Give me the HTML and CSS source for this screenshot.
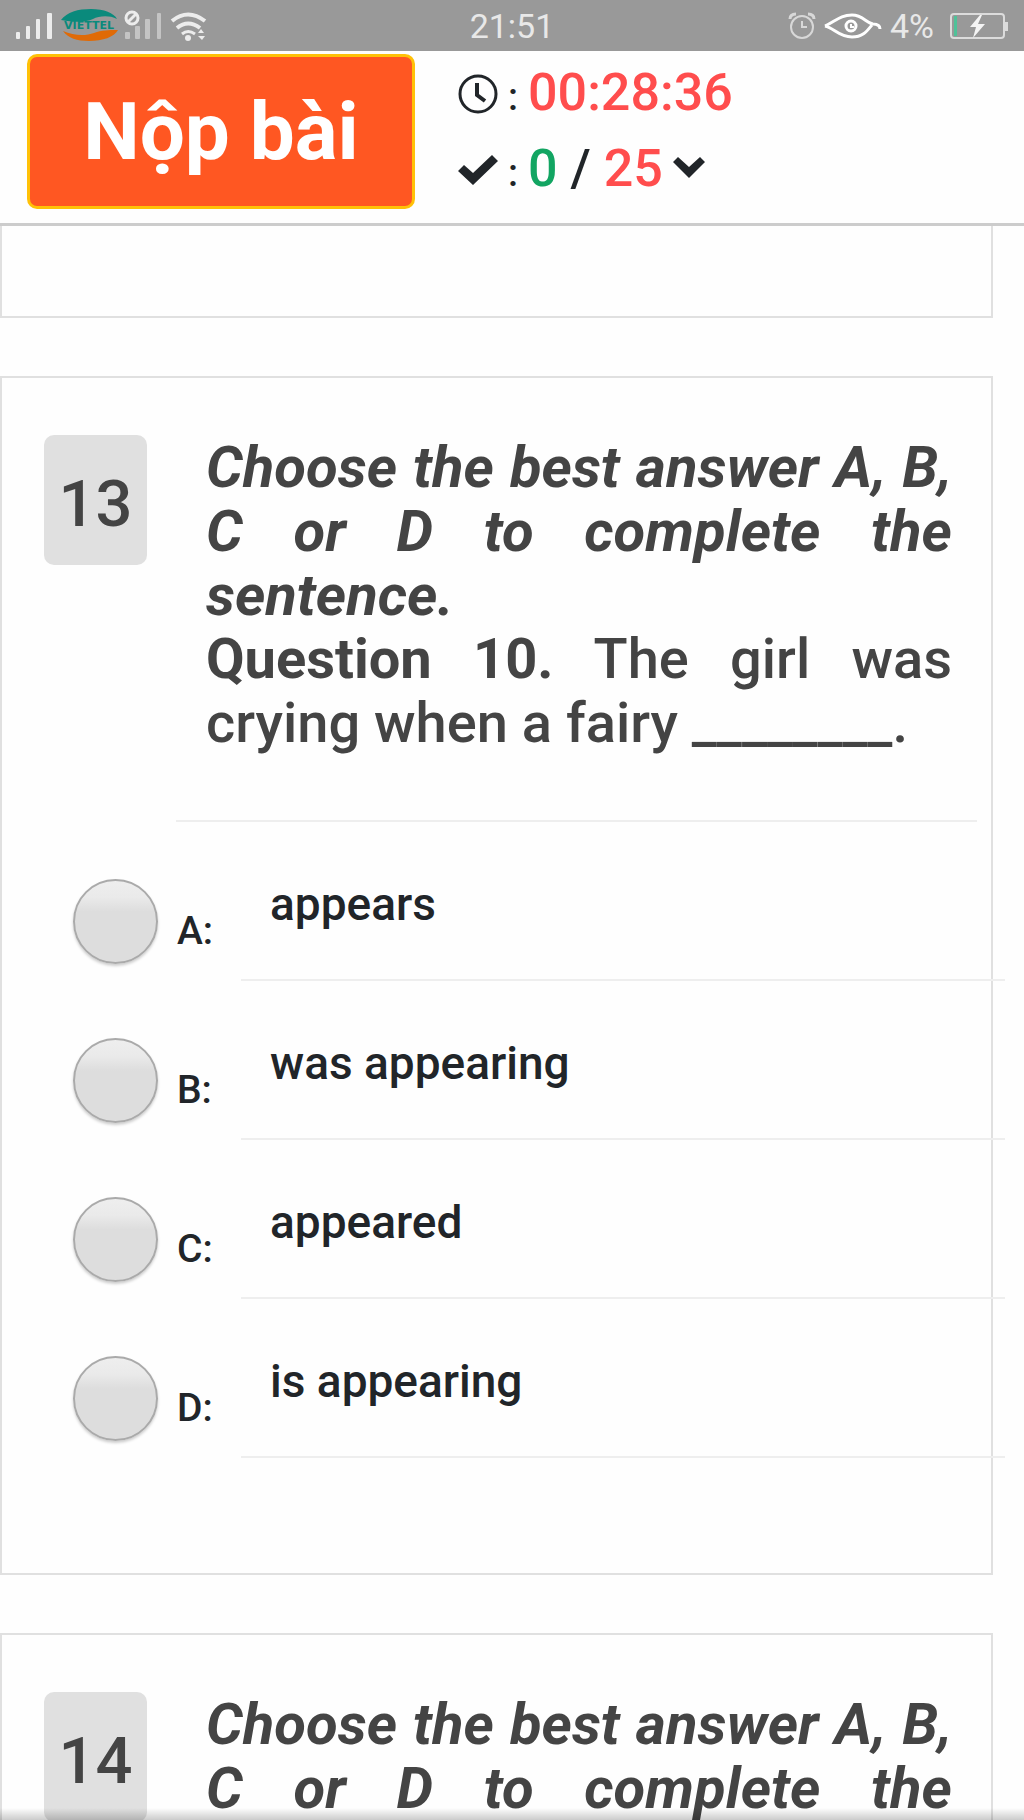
FILE: index.html
```html
<!DOCTYPE html>
<html lang="vi">
<head>
<meta charset="utf-8">
<meta name="viewport" content="width=device-width, initial-scale=1">
<title>Bài thi</title>
<link rel="stylesheet" href="styles.css">
</head>
<body>
<div class="app">
  <div class="status">
    <div class="status-group">
      <svg class="icon-network" width="192" height="36" viewBox="0 0 192 36" aria-hidden="true">
        <g fill="#ececec">
          <rect x="0" y="24" width="4" height="7" rx="1"/><rect x="10" y="18" width="4" height="13" rx="1"/>
          <rect x="20" y="11" width="4" height="20" rx="1"/><rect x="31" y="5" width="5" height="26" rx="1"/>
        </g>
        <path d="M45 12C51 4 62 1 75 1c13 0 23 4 26 10-8-4-18-3-24 0-7 3-17 4-32 1z" fill="#0a8a7c"/>
        <path d="M47 23c5 7 14 10 26 10 14 0 25-4 29-11-10 0-16 0-24 3-8 3-20 3-31-2z" fill="#e06a06"/>
        <text class="carrier" x="73" y="21" text-anchor="middle">VIETTEL</text>
        <g fill="#c4c4c4">
          <rect x="109" y="24" width="5" height="7" rx="1"/><rect x="119" y="18" width="5" height="13" rx="1"/>
          <rect x="129" y="11" width="5" height="20" rx="1"/><rect x="141" y="5" width="4" height="26" rx="1"/>
        </g>
        <g fill="none" stroke="#ececec" stroke-width="3">
          <circle cx="116" cy="10" r="6"/><path d="M112 14l8-8"/>
          <g stroke-width="4"><path d="M156 13q16-13 33 0"/><path d="M161 20q11-9 23 0"/><path d="M166 26q6-5 13 0" stroke-width="3"/></g>
        </g>
        <circle cx="172" cy="30" r="3" fill="#ececec"/>
        <path d="M182 25l3-4 3 4zM182 28h7l-3 4z" fill="#ececec"/>
      </svg>
    </div>
    <time class="clock">21:51</time>
    <div class="status-group status-end">
      <svg width="28" height="28" viewBox="0 0 28 28" fill="none" stroke="#d8d8d8" stroke-width="2" aria-hidden="true">
        <circle cx="14" cy="15" r="11"/><path d="M14 9v6h5"/><path d="M2 7q0-5 6-5M20 2q6 0 6 5" stroke-width="3"/>
      </svg>
      <svg width="58" height="28" viewBox="0 0 58 28" fill="none" stroke="#fff" stroke-width="3" aria-hidden="true">
        <path d="M1 14C12 9 16 3 28 3c11 0 14 8 21 9 4 0 7 1 7 5"/>
        <path d="M1 14c9 2 14 11 27 11 11 0 15-6 20-12"/>
        <circle cx="27" cy="14" r="5"/><path d="M27 12v3h3" stroke-width="2"/>
      </svg>
      <span class="level">4%</span>
      <svg width="58" height="28" viewBox="0 0 58 28" aria-hidden="true">
        <rect x="1" y="2" width="53" height="24" rx="3" fill="none" stroke="#dcdcdc" stroke-width="2"/>
        <rect x="55" y="10" width="3" height="9" fill="#dcdcdc"/>
        <rect x="4" y="4" width="3" height="20" fill="#4fc299"/>
        <path d="M30 3L20 15h6l-3 11L35 12h-7l4-9z" fill="#f4f4f4"/>
      </svg>
    </div>
  </div>

  <header class="toolbar">
    <button class="submit" type="button">Nộp bài</button>
    <div class="stats">
      <div class="stat">
        <svg width="40" height="40" viewBox="0 0 40 40" fill="none" stroke="#212529" aria-hidden="true">
          <circle cx="20" cy="20" r="18" stroke-width="3"/><path d="M19 9v12l8 6" stroke-width="4"/>
        </svg>
        <p class="stat-text"><span class="colon">:</span><span class="red">00:28:36</span></p>
      </div>
      <div class="stat">
        <svg width="40" height="30" viewBox="0 0 40 30" aria-hidden="true">
          <path d="M0 16l6-6 9 8L34 0l6 6-25 24z" fill="#212529"/>
        </svg>
        <p class="stat-text"><span class="colon">:</span><span class="green">0</span> / <span class="red">25</span></p>
        <button class="toggle" type="button" aria-label="Mở danh sách câu hỏi">
          <svg width="32" height="30" viewBox="0 0 32 30" aria-hidden="true"><path d="M0 7l5-5 11 10L27 2l5 5-16 16z" fill="#212529"/></svg>
        </button>
      </div>
    </div>
  </header>

  <main class="questions">
    <section class="card card-previous"></section>

    <section class="card">
      <div class="question">
        <div class="number">13</div>
        <div class="prompt">
          <p class="instruction"><strong><em>Choose the best answer A, B, C or D to complete the sentence.</em></strong></p>
          <p><strong>Question 10.</strong> The girl was crying when a fairy ________.</p>
        </div>
      </div>
      <div class="options">
        <label class="option"><input class="radio" type="radio" name="q13" value="A"><span class="letter">A:</span><span class="answer">appears</span></label>
        <label class="option"><input class="radio" type="radio" name="q13" value="B"><span class="letter">B:</span><span class="answer">was appearing</span></label>
        <label class="option"><input class="radio" type="radio" name="q13" value="C"><span class="letter">C:</span><span class="answer">appeared</span></label>
        <label class="option"><input class="radio" type="radio" name="q13" value="D"><span class="letter">D:</span><span class="answer">is appearing</span></label>
      </div>
    </section>

    <section class="card">
      <div class="question">
        <div class="number">14</div>
        <div class="prompt">
          <p class="instruction"><strong><em>Choose the best answer A, B, C or D to complete the sentence.</em></strong></p>
        </div>
      </div>
    </section>
  </main>
</div>
</body>
</html>
```
FILE: styles.css
```css
* { box-sizing: border-box; }

body {
  margin: 0;
  background: #fefefe;
  color: #212529;
  font-family: Roboto, "Liberation Sans", sans-serif;
  font-weight: 500;
}

p { margin: 0; }

svg { display: block; flex: none; }

.app {
  position: relative;
  display: flex;
  flex-direction: column;
  height: 100vh;
  overflow: hidden;
}

/* shade along the lower edge of the screen */
.app::after {
  content: "";
  position: absolute;
  inset: auto 0 0;
  height: 12px;
  background: linear-gradient(transparent, rgba(0, 0, 0, 0.2));
}

/* Status bar */
.status {
  flex: none;
  display: grid;
  grid-template-columns: 1fr auto 1fr;
  align-items: center;
  height: 51px;
  padding: 0 16px;
  background: #999;
  color: #e8e8e8;
  font-size: 34px;
  font-weight: 400;
}

.status-group {
  display: flex;
  align-items: center;
  gap: 8px;
}

.status-end { justify-content: flex-end; }

.level { margin-right: 8px; }

.carrier {
  fill: #0a8a7c;
  font: bold 11px "DejaVu Sans", sans-serif;
}

/* Toolbar */
.toolbar {
  flex: none;
  display: flex;
  gap: 43px;
  padding: 3px 27px 14px;
  border-bottom: 3px solid #ccc;
}

.submit {
  width: 388px;
  height: 155px;
  padding: 0;
  border: 3px solid #ffc107;
  border-radius: 10px;
  background: #ff5722;
  color: #fff;
  font-family: inherit;
  font-size: 80px;
  font-weight: 700;
  line-height: 90px;
}

.stat {
  display: flex;
  align-items: center;
  gap: 10px;
  height: 76px;
}

.stats { padding-top: 2px; }

.stat-text {
  padding-bottom: 4px;
  font-size: 52px;
}

.colon {
  margin-right: 10px;
  font-size: 38px;
}

.red { color: #ff4d4d; }

.green { color: #12a562; }

.toggle {
  padding: 0;
  border: 0;
  background: none;
}

/* Question cards */
.card {
  margin: 0 31px 58px 0;
  border: 2px solid #e0e0e0;
  padding: 57px 15px 115px 0;
}

.card-previous {
  height: 92px;
  padding: 0;
  border-top: 0;
}

.question {
  display: flex;
  align-items: flex-start;
  gap: 59px;
  padding: 0 24px 0 42px;
}

.number {
  flex: none;
  width: 103px;
  padding: 29px 0 21px;
  border-radius: 10px;
  background: #e0e0e0;
  color: #444;
  font-size: 65px;
  line-height: 80px;
  text-align: center;
}

.prompt {
  flex: 1;
  color: #444;
  font-size: 56px;
  line-height: 64px;
  text-align: justify;
}

.prompt strong { font-weight: 700; }

.instruction { font-size: 58px; }

/* Answers */
.options {
  margin: 65px -29px 0 0;
}

.options::before {
  content: "";
  display: block;
  margin: 0 28px 0 174px;
  border-top: 2px solid #eee;
}

.option {
  display: grid;
  grid-template-columns: 85px 64px 1fr;
  column-gap: 19px;
  align-items: start;
  padding-left: 71px;
}

.radio {
  appearance: none;
  width: 85px;
  height: 85px;
  margin: 57px 0 0;
  border: 2px solid #aaa;
  border-radius: 50%;
  background: linear-gradient(#eee, #eaeaea 20%, #ddd 38%);
  box-shadow: 0 2px 3px rgba(0, 0, 0, 0.2);
}

.letter {
  margin-top: 86px;
  font-size: 39px;
  line-height: 46px;
}

.answer {
  margin-left: -19px;
  padding: 55px 29px 48px;
  border-bottom: 2px solid #eee;
  font-size: 46px;
  line-height: 54px;
}
```
